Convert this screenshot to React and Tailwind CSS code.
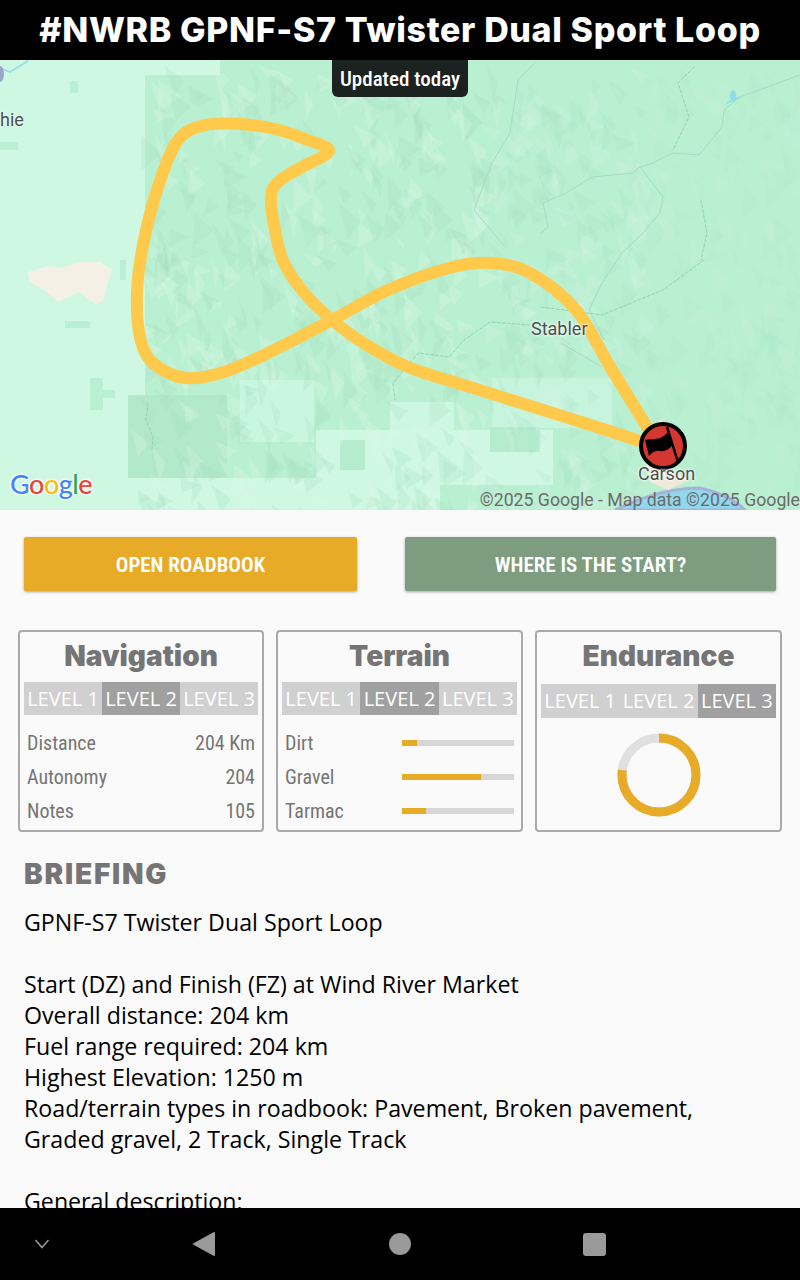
import { useMemo } from 'react';

const bodyFont = "[font-family:'Open_Sans',sans-serif]";
const narrowFont = "[font-family:Roboto,sans-serif] [font-stretch:75%]";
const mapFont = "[font-family:Roboto,sans-serif]";
const headFont = "[font-family:Inter,sans-serif]";

// route as traced over the map, in screen coordinates
const routePts = [
  [655, 440], [612, 370], [576, 310], [530, 273], [490, 263], [449, 268], [388, 290], [332, 320],
  [270, 352], [224, 372], [185, 378], [153, 363], [140, 337], [137, 293], [143, 245], [158, 187], [178, 140], [205, 125], [240, 124],
  [275, 129], [305, 139], [329, 151], [300, 168], [278, 182], [271, 197], [275, 230], [284, 263], [306, 295], [332, 320], [365, 344],
  [408, 367], [470, 387], [540, 409], [600, 428], [652, 445],
];

function smooth(pts) {
  let d = `M${pts[0][0]} ${pts[0][1]}`;
  for (let i = 0; i < pts.length - 1; i++) {
    const p0 = pts[i - 1] || pts[i];
    const p1 = pts[i];
    const p2 = pts[i + 1];
    const p3 = pts[i + 2] || p2;
    const c1 = [p1[0] + (p2[0] - p0[0]) / 6, p1[1] + (p2[1] - p0[1]) / 6];
    const c2 = [p2[0] - (p3[0] - p1[0]) / 6, p2[1] - (p3[1] - p1[1]) / 6];
    d += ` C${c1[0]} ${c1[1]} ${c2[0]} ${c2[1]} ${p2[0]} ${p2[1]}`;
  }
  return d;
}

function makeFacets() {
  let seed = 4127;
  const rnd = () => {
    seed = (seed * 16807) % 2147483647;
    return seed / 2147483647;
  };
  const out = [];
  for (let i = 0; i < 900; i++) {
    const x = 130 + rnd() * 670;
    const y = 62 + rnd() * 448;
    // the eastern ground is much calmer than the ridges in the middle
    const strength = x < 480 ? 1 : x < 640 ? 0.7 : 0.35;
    const w = 8 + rnd() * 16;
    const h = 12 + rnd() * 26;
    const lean = (rnd() - 0.5) * 16;
    const light = rnd() > 0.55;
    out.push({
      points: `${x},${y} ${x + w},${y + h * 0.5} ${x + lean + w * 0.3},${y + h}`,
      fill: light ? '#d8f7e6' : '#a3dcbd',
      opacity: (light ? 0.3 : 0.24) * strength,
    });
  }
  return out;
}

function MapArt() {
  const facets = useMemo(makeFacets, []);
  const route = useMemo(() => smooth(routePts), []);
  return (
    <svg viewBox="0 60 800 450" className="absolute inset-0 w-full h-full">
      <rect x="0" y="60" width="800" height="450" fill="#baf0d2" />
      {/* light lowland to the west */}
      <path d="M0 60H220V75H145V400H128V510H0Z" fill="#cff8e3" />
      <rect x="0" y="142" width="18" height="8" fill="#baf0d2" />
      <rect x="70" y="81" width="8" height="12" fill="#baf0d2" />
      <rect x="120" y="260" width="6" height="20" fill="#baf0d2" />
      <rect x="65" y="321" width="25" height="7" fill="#baf0d2" />
      <rect x="90" y="378" width="13" height="32" fill="#baf0d2" />
      <rect x="103" y="390" width="12" height="8" fill="#baf0d2" />
      {/* lighter clearings */}
      <rect x="240" y="380" width="74" height="62" fill="#c9f6de" />
      <rect x="492" y="378" width="120" height="50" fill="#c6f4dc" />
      <rect x="390" y="402" width="64" height="40" fill="#ccf7e1" />
      <rect x="316" y="430" width="237" height="60" fill="#cff8e3" />
      <rect x="128" y="478" width="312" height="32" fill="#cff8e3" />
      <rect x="490" y="427" width="50" height="25" fill="#b5ecce" />
      <rect x="340" y="440" width="25" height="30" fill="#b5ecce" />
      <rect x="128" y="395" width="99" height="83" fill="#b3e9cb" />
      <rect x="440" y="485" width="115" height="25" fill="#baf0d2" />
      {facets.map((f, i) => (
        <polygon key={i} points={f.points} fill={f.fill} opacity={f.opacity} />
      ))}
      {/* sand patch */}
      <path d="M28 272 L48 266 L62 268 L78 262 L100 262 L112 270 L106 288 L104 300 L96 305 L80 292 L58 302 L44 290 L30 282Z" fill="#f5f0e6" />
      {/* rivers and borders */}
      <g fill="none" strokeLinecap="round" strokeLinejoin="round">
        <path d="M535 63 L518 80 L510 133 L492 163 L474 210 L505 247" stroke="#a8dac6" strokeWidth="1" />
        <path d="M800 75 L740 97 L724 110 L722 127 L699 155 L673 153 L653 163 L640 167 L633 173 L592 177 L566 193 L543 203 L548 227 L541 233" stroke="#a8dac6" strokeWidth="1" />
        <path d="M640 167 L663 197 L660 213 L643 233 L622 253 L602 283 L589 310 L604 340" stroke="#a8dac6" strokeWidth="1" />
        <path d="M561 343 L602 367" stroke="#a8dac6" strokeWidth="1" />
        <path d="M694 67 L678 83 L689 117 L673 150" stroke="#8dd6b5" strokeWidth="1" strokeDasharray="3 2" />
        <path d="M701 200 L707 233 L701 260" stroke="#8dd6b5" strokeWidth="1" strokeDasharray="3 2" />
        <path d="M704 260 L663 290 L602 315 L541 307" stroke="#8dd6b5" strokeWidth="1" strokeDasharray="3 2" />
        <path d="M530 325 L490 322 L464 340 L449 357 L418 353 L393 383 L395 400" stroke="#8dd6b5" strokeWidth="1" strokeDasharray="3 2" />
        <path d="M148 403 L146 420 L153 437 L152 450" stroke="#8dd6b5" strokeWidth="1" strokeDasharray="3 2" />
        <path d="M0 68 L10 72 L28 61" stroke="#8fdcee" strokeWidth="1.5" />
        <path d="M727 103 L740 97" stroke="#8fdcee" strokeWidth="1.5" />
      </g>
      <ellipse cx="733" cy="96" rx="3" ry="6" fill="#8fdcee" />
      <path d="M0 66 A4 8 0 0 1 0 82Z" fill="#9aa8d0" />
      {/* river at the bottom edge */}
      <path d="M615 510 Q660 488 700 488 Q730 495 745 510Z" fill="#8fd9ee" stroke="#a6b2d8" strokeWidth="3" />
      <path d="M645 462 L668 472 L690 480 L668 490 L650 482Z" fill="#efe9da" />
      <path d="M660 420 L676 452" stroke="#efe9da" strokeWidth="4" />
      <path d={route} fill="none" stroke="#ffc94b" strokeWidth="12" strokeLinejoin="round" strokeLinecap="round" />
      {/* start flag */}
      <circle cx="663" cy="446" r="22" fill="#d3372f" stroke="#000" strokeWidth="4" />
      <path d="M645 440 C652 438 657 440 662 437 C666 435 668 432 669 430 L673 445 C668 450 664 452 660 451 C655 450 652 453 649 456Z" fill="#000" />
      <path d="M667 427 L678 462" stroke="#000" strokeWidth="2.5" />
    </svg>
  );
}

function Level({ active, tall }) {
  return (
    <div className={tall ? 'flex h-[34px] mx-[2px] mt-[11px]' : 'flex h-[33px] mx-[2px] mt-[9px]'}>
      {[1, 2, 3].map((n) => (
        <div
          key={n}
          className={`flex-1 flex items-center justify-center text-white text-[20px] whitespace-nowrap ${bodyFont} ${
            n === active ? 'bg-[#a0a0a0]' : 'bg-[#d0d0d0]'
          }`}
        >
          LEVEL {n}
        </div>
      ))}
    </div>
  );
}

function Title({ children }) {
  return (
    <h3 className={`text-center text-[#757575] text-[28px] font-black leading-[34px] mt-[5px] ${headFont}`}>
      {children}
    </h3>
  );
}

function StatRow({ label, value }) {
  return (
    <div className={`flex justify-between items-center h-[34px] text-[#757575] text-[20px] ${narrowFont}`}>
      <span>{label}</span>
      <span>{value}</span>
    </div>
  );
}

function BarRow({ label, fill }) {
  return (
    <div className={`flex items-center h-[34px] text-[#757575] text-[20px] ${narrowFont}`}>
      <span className="w-[117px]">{label}</span>
      <div className="w-[112px] h-[6px] bg-[#d6d6d6]">
        <div className="h-full bg-[#e8ab28]" style={{ width: fill }} />
      </div>
    </div>
  );
}

function Card({ width, children }) {
  return <div className={`${width} h-[202px] border-2 border-[#aaaaaa] rounded-[4px] p-[2px]`}>{children}</div>;
}

export default function App() {
  return (
    <div className="w-[800px] h-[1280px] flex flex-col overflow-hidden bg-[#fafafa]">
      <header className="h-[60px] shrink-0 bg-black flex items-center justify-center pb-[2px]">
        <h1 className={`text-white text-[34px] font-extrabold tracking-[0.65px] whitespace-nowrap ${headFont}`}>
          #NWRB GPNF-S7 Twister Dual Sport Loop
        </h1>
      </header>

      <div className="relative h-[450px] shrink-0 overflow-hidden">
        <MapArt />
        <div
          className={`absolute top-0 left-[332px] w-[136px] h-[37px] pt-[3px] bg-[#1c2220] rounded-b-[6px] flex items-center justify-center text-white text-[21px] font-medium whitespace-nowrap ${narrowFont}`}
        >
          Updated today
        </div>
        <span className={`absolute left-0 top-[46px] text-[18px] text-[#4a5250] [text-shadow:0_0_3px_#fff] ${mapFont}`}>
          hie
        </span>
        <span className={`absolute left-[531px] top-[255px] text-[18px] text-[#4a4f4e] [text-shadow:0_0_3px_#fff,0_0_3px_#fff] ${mapFont}`}>
          Stabler
        </span>
        <span className={`absolute left-[638px] top-[400px] text-[18px] text-[#4a4f4e] [text-shadow:0_0_3px_#fff,0_0_3px_#fff] ${mapFont}`}>
          Carson
        </span>
        <div className="absolute left-[10px] top-[409px] text-[27px] font-medium leading-[30px] tracking-[-0.5px] [font-family:Lato,sans-serif] [text-shadow:0_0_3px_#fff,0_0_3px_#fff,0_0_3px_#fff]">
          <span className="text-[#4285f4]">G</span>
          <span className="text-[#ea4335]">o</span>
          <span className="text-[#fbbc05]">o</span>
          <span className="text-[#4285f4]">g</span>
          <span className="text-[#34a853]">l</span>
          <span className="text-[#ea4335]">e</span>
        </div>
        <span className={`absolute right-0 top-[427px] text-[17.7px] text-[#6e6a6a] whitespace-nowrap ${mapFont}`}>
          ©2025 Google - Map data ©2025 Google
        </span>
      </div>

      <main className="flex-1 min-h-0 overflow-hidden">
        <div className="flex justify-between pt-[27px] px-[24px]">
          <button className={`w-[333px] h-[54px] rounded-[2px] bg-[#e8ab28] text-white text-[21px] font-semibold pt-[3px] shadow-[0_1px_3px_rgba(0,0,0,0.35)] ${narrowFont}`}>
            OPEN ROADBOOK
          </button>
          <button className={`w-[371px] h-[54px] rounded-[2px] bg-[#7e9d80] text-white text-[21px] font-semibold pt-[3px] shadow-[0_1px_3px_rgba(0,0,0,0.35)] ${narrowFont}`}>
            WHERE IS THE START?
          </button>
        </div>

        <div className="flex gap-[12px] mt-[39px] mx-[18px]">
          <Card width="w-[246px]">
            <Title>Navigation</Title>
            <Level active={2} />
            <div className="px-[5px] mt-[11px]">
              <StatRow label="Distance" value="204 Km" />
              <StatRow label="Autonomy" value="204" />
              <StatRow label="Notes" value="105" />
            </div>
          </Card>
          <Card width="w-[247px]">
            <Title>Terrain</Title>
            <Level active={2} />
            <div className="px-[5px] mt-[11px]">
              <BarRow label="Dirt" fill="15px" />
              <BarRow label="Gravel" fill="79px" />
              <BarRow label="Tarmac" fill="24px" />
            </div>
          </Card>
          <Card width="w-[247px]">
            <Title>Endurance</Title>
            <Level active={3} tall />
            <div className="flex justify-center mt-[15px]">
              <svg width="84" height="84" viewBox="0 0 84 84">
                <circle cx="42" cy="42" r="37" fill="none" stroke="#e0e0e0" strokeWidth="9" />
                <circle
                  cx="42"
                  cy="42"
                  r="37"
                  fill="none"
                  stroke="#e8ab28"
                  strokeWidth="9"
                  strokeDasharray="179 232.5"
                  transform="rotate(-90 42 42)"
                />
              </svg>
            </div>
          </Card>
        </div>

        <section className={`px-[24px] mt-[24px] ${bodyFont}`}>
          <h2 className={`text-[#757575] text-[28px] font-black leading-[36px] tracking-[1.8px] ${headFont}`}>
            BRIEFING
          </h2>
          <div className="mt-[15px] text-black text-[23.2px] leading-[31px]">
            <p>GPNF-S7 Twister Dual Sport Loop</p>
            <br />
            <p>Start (DZ) and Finish (FZ) at Wind River Market</p>
            <p>Overall distance: 204 km</p>
            <p>Fuel range required: 204 km</p>
            <p>Highest Elevation: 1250 m</p>
            <p>Road/terrain types in roadbook: Pavement, Broken pavement, Graded gravel, 2 Track, Single Track</p>
            <br />
            <p>General description:</p>
          </div>
        </section>
      </main>

      <nav className="h-[72px] shrink-0 bg-black flex items-center">
        <div className="w-[144px] pl-[33px]">
          <svg width="18" height="12" viewBox="0 0 18 12" fill="none" stroke="#9a9a9a" strokeWidth="1.5">
            <path d="M2.5 2 L9 9.5 L15.5 2" />
          </svg>
        </div>
        <div className="w-[120px] flex justify-center">
          <svg width="24" height="26" viewBox="0 0 24 26">
            <path d="M22 1 Q23 1 23 2 L23 24 Q23 25 22 25 L1 13.5 Q0.5 13 1 12.5 Z" fill="#9a9a9a" />
          </svg>
        </div>
        <div className="w-[272px] flex justify-center">
          <div className="w-[22px] h-[22px] rounded-full bg-[#9a9a9a]" />
        </div>
        <div className="w-[116px] flex justify-center">
          <div className="w-[23px] h-[23px] rounded-[3px] bg-[#9a9a9a]" />
        </div>
      </nav>
    </div>
  );
}
